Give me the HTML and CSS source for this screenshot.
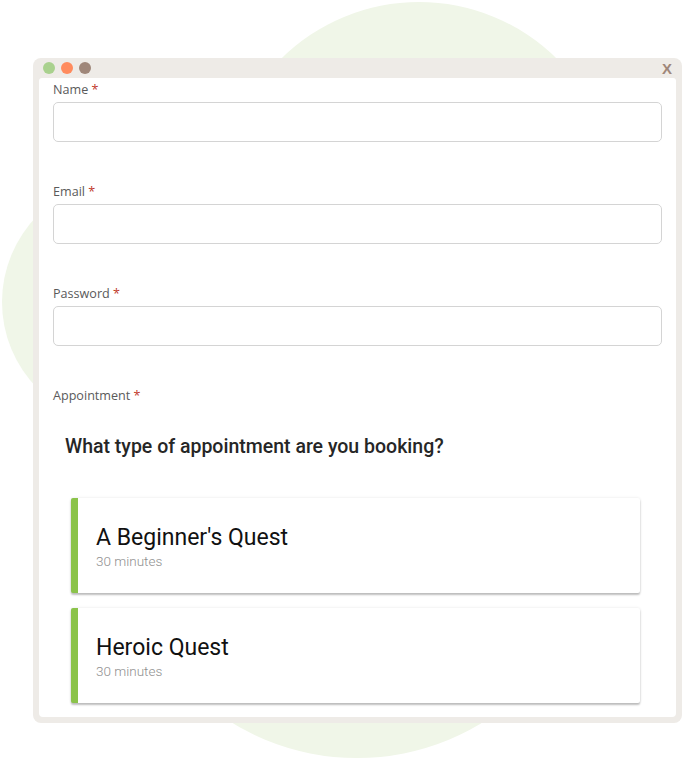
FILE: index.html
```html
<!DOCTYPE html>
<html lang="en">
<head>
<meta charset="utf-8">
<title>Booking form</title>
<link rel="stylesheet" href="styles.css">
</head>
<body>
<svg class="blob" width="682" height="761" viewBox="0 0 682 761" aria-hidden="true">
  <circle cx="419" cy="198" r="196" fill="#f0f6e8"/>
  <circle cx="357" cy="518" r="240" fill="#f0f6e8"/>
  <circle cx="125" cy="302" r="123" fill="#f0f6e8"/>
</svg>
<div class="window">
  <div class="titlebar">
    <span class="dot dot-green"></span>
    <span class="dot dot-orange"></span>
    <span class="dot dot-brown"></span>
    <span class="close">X</span>
  </div>
  <div class="content">
    <div class="field">
      <label class="label">Name <span class="req">*</span></label>
      <div class="input"></div>
    </div>
    <div class="field">
      <label class="label">Email <span class="req">*</span></label>
      <div class="input"></div>
    </div>
    <div class="field">
      <label class="label">Password <span class="req">*</span></label>
      <div class="input"></div>
    </div>
    <div class="field">
      <label class="label">Appointment <span class="req">*</span></label>
      <div class="booking">
        <h2 class="question">What type of appointment are you booking?</h2>
        <div class="cards">
          <div class="card">
            <div class="card-title">A Beginner's Quest</div>
            <div class="card-sub">30 minutes</div>
          </div>
          <div class="card">
            <div class="card-title">Heroic Quest</div>
            <div class="card-sub">30 minutes</div>
          </div>
        </div>
      </div>
    </div>
  </div>
</div>
</body>
</html>
```

FILE: styles.css
```css
html, body {
  margin: 0;
  padding: 0;
}
body {
  width: 682px;
  height: 761px;
  overflow: hidden;
  background: #ffffff;
  position: relative;
  font-family: "Open Sans", "Liberation Sans", sans-serif;
}
.blob {
  position: absolute;
  left: 0;
  top: 0;
  z-index: 0;
}
.window {
  position: relative;
  z-index: 1;
  margin: 58px 0 0 33px;
  width: 649px;
  height: 665px;
  box-sizing: border-box;
  background: #eeebe7;
  border-radius: 8px;
  display: flex;
  flex-direction: column;
}
.titlebar {
  height: 20px;
  flex: none;
  display: flex;
  align-items: center;
  gap: 6px;
  padding: 0 10px 0 10px;
}
.dot {
  width: 12px;
  height: 12px;
  border-radius: 50%;
}
.dot-green { background: #a9d18e; }
.dot-orange { background: #ff8b5e; }
.dot-brown { background: #9f877a; }
.close {
  margin-left: auto;
  font-family: "Liberation Sans", sans-serif;
  font-weight: bold;
  font-size: 15px;
  line-height: 15px;
  color: #9f877a;
  padding-top: 1px;
}
.content {
  flex: 1;
  margin: 0 6px 6px 6px;
  background: #ffffff;
  border-radius: 3px 3px 4px 4px;
  overflow: hidden;
  padding: 3px 14px 0 14px;
}
.field + .field {
  margin-top: 41px;
}
.label {
  display: block;
  font-size: 12.6px;
  line-height: 18px;
  color: #5a5a5a;
}
.req {
  color: #c0392b;
}
.input {
  margin-top: 3px;
  height: 40px;
  box-sizing: border-box;
  border: 1px solid #d4d4d4;
  border-radius: 5px;
  background: #fff;
}
.booking {
  padding-top: 30px;
  font-family: Roboto, "Liberation Sans", sans-serif;
}
.question {
  margin: 0;
  padding-left: 12px;
  font-size: 19.5px;
  line-height: 24px;
  font-weight: 500;
  color: #262626;
}
.cards {
  margin: 39px 22px 0 18px;
  display: flex;
  flex-direction: column;
  gap: 15px;
}
.card {
  height: 95px;
  box-sizing: border-box;
  background: #fff;
  border-left: 7px solid #8bc34a;
  border-radius: 2px;
  box-shadow: 0 2px 2px rgba(0, 0, 0, 0.24), 0 0 3px rgba(0, 0, 0, 0.1);
  padding: 26px 0 0 18px;
}
.card-title {
  font-size: 23px;
  line-height: 28px;
  color: #111111;
}
.card-sub {
  font-size: 13.5px;
  line-height: 18px;
  font-weight: 300;
  color: #8f8f8f;
}
```
